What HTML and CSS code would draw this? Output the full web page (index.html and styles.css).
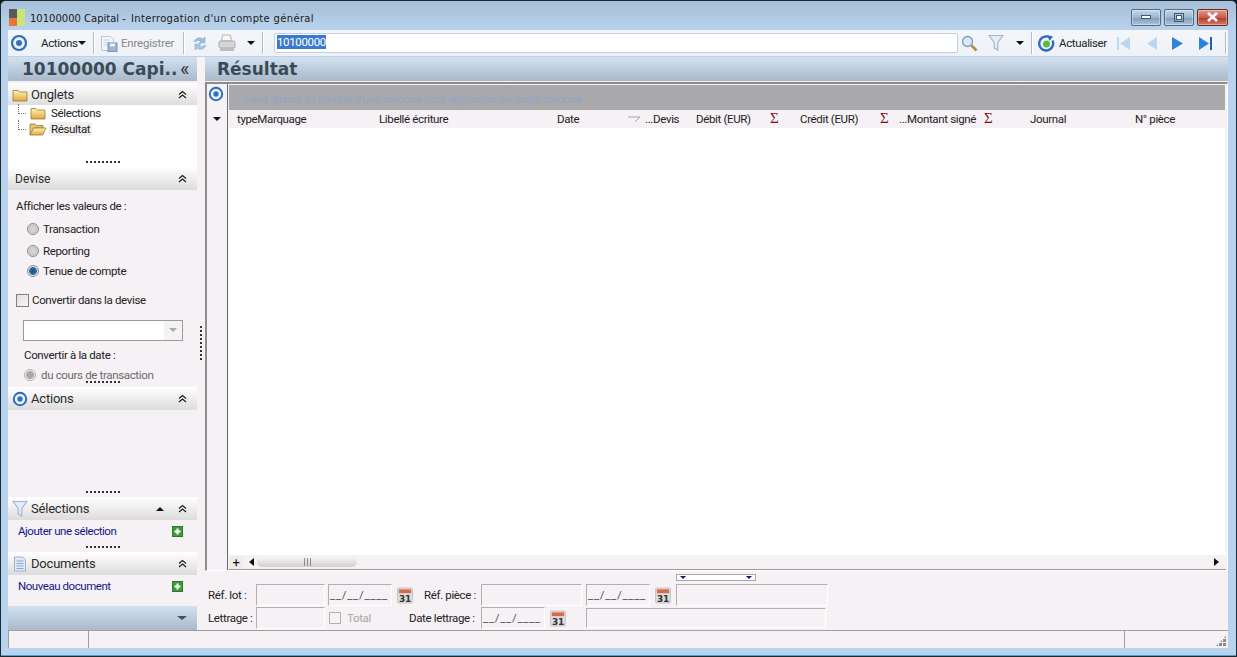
FILE: index.html
```html
<!DOCTYPE html>
<html lang="fr">
<head>
<meta charset="utf-8">
<title>Interrogation d'un compte général</title>
<link rel="stylesheet" href="styles.css">
</head>
<body>
<svg class="defs" width="0" height="0" aria-hidden="true">
  <defs>
    <linearGradient id="fold" x1="0" y1="0" x2="0" y2="1"><stop offset="0" stop-color="#fff3b8"/><stop offset="1" stop-color="#e0a93a"/></linearGradient>
    <radialGradient id="ringg"><stop offset="0" stop-color="#fff"/><stop offset="1" stop-color="#dfe9f5"/></radialGradient>
    <symbol id="target" viewBox="0 0 18 18">
      <circle cx="9" cy="9" r="7" fill="url(#ringg)" stroke="#2e6db8" stroke-width="2.2"/>
      <circle cx="9" cy="9" r="3" fill="#2f72c4"/>
    </symbol>
    <symbol id="folder" viewBox="0 0 16 14">
      <path d="M1 2.5h5l1.5 1.5H15v9H1z" fill="url(#fold)" stroke="#9c7a32" stroke-width=".8"/>
    </symbol>
    <symbol id="folder-open" viewBox="0 0 18 14">
      <path d="M1 2h5l1.5 1.5H14V6H5L1 13z" fill="#e8c672" stroke="#9c7a32" stroke-width=".8"/>
      <path d="M1 13l3.5-7H17l-3.5 7z" fill="url(#fold)" stroke="#9c7a32" stroke-width=".8"/>
    </symbol>
    <symbol id="chev" viewBox="0 0 9 9">
      <path d="M1 4.5l3.5-3 3.5 3M1 8l3.5-3 3.5 3" fill="none" stroke="#222" stroke-width="1.3"/>
    </symbol>
    <symbol id="plus" viewBox="0 0 11 11">
      <rect x=".5" y=".5" width="10" height="10" fill="#3e9a3a" stroke="#2c7a2c"/>
      <path d="M5.5 2.5v6M2.5 5.5h6" stroke="#fff" stroke-width="2"/>
    </symbol>
    <symbol id="cal" viewBox="0 0 17 17">
      <rect x=".5" y=".5" width="16" height="16" rx="1.5" fill="#dcdcdc" stroke="#c4c4c4"/>
      <rect x="2" y="2" width="13" height="4" fill="#d9694a"/>
      <text x="8.5" y="15" font-family="'DejaVu Sans',sans-serif" font-weight="700" font-size="9.5" text-anchor="middle" fill="#333">31</text>
    </symbol>
    <symbol id="funnel" viewBox="0 0 16 18">
      <path d="M1 1.5h14L9.8 8.5v7.5l-3.6-2V8.5z" fill="#e4edf7" stroke="#9db4cc" stroke-width="1.1"/>
    </symbol>
  </defs>
</svg>

<div class="window">
  <header class="titlebar">
    <svg class="app-icon" width="16" height="17" viewBox="0 0 16 17" aria-hidden="true">
      <rect x="0" y="0" width="8" height="9" fill="#5a5a5a"/>
      <rect x="8" y="0" width="8" height="17" fill="#c8e47a"/>
      <rect x="0" y="9" width="8" height="8" fill="#e8743c"/>
    </svg>
    <span class="title-a">10100000 Capital -</span>
    <span class="title-b">Interrogation d'un compte général</span>
    <div class="winbtns">
      <div class="winbtn"><svg width="10" height="5" viewBox="0 0 10 5"><rect x=".5" y=".5" width="9" height="3" fill="#fff" stroke="#44586e"/></svg></div>
      <div class="winbtn"><svg width="10" height="9" viewBox="0 0 10 9"><rect x=".5" y=".5" width="9" height="8" fill="none" stroke="#44586e"/><rect x="2.5" y="2.5" width="5" height="4" fill="#fff" stroke="#44586e"/></svg></div>
      <div class="winbtn close"><svg width="13" height="10" viewBox="0 0 13 10"><path d="M2 1l9 8M11 1l-9 8" stroke="#fff" stroke-width="2.6"/></svg></div>
    </div>
  </header>

  <div class="toolbar">
    <svg class="t-target" width="18" height="18"><use href="#target"/></svg>
    <span class="t-actions">Actions</span><span class="caret c1"></span>
    <span class="t-sep s1"></span>
    <svg class="t-save" width="18" height="17" viewBox="0 0 18 17" aria-hidden="true">
      <path d="M1.5 1.5h9l3 3v11h-12z" fill="#f3f6fb" stroke="#b8c6d8"/>
      <path d="M3.5 5h6M3.5 7.5h7M3.5 10h4" stroke="#c4d0e0"/>
      <rect x="8" y="8" width="9" height="8.5" fill="#9db4d2" stroke="#7d96b8"/>
      <rect x="10" y="8.5" width="5" height="3" fill="#eef2f8"/>
    </svg>
    <span class="t-save-label">Enregistrer</span>
    <span class="t-sep s2"></span>
    <svg class="t-sync" width="16" height="17" viewBox="0 0 16 17" aria-hidden="true">
      <path d="M2 7c1-4 6-5.500 9-3l2-2v6H7l2-2C7.500 5 5 5.500 2 7z" fill="#9dbfe2" stroke="#86a9d0" stroke-width=".6"/>
      <path d="M14 10c-1 4-6 5.500-9 3l-2 2V9h6l-2 2c1.500 1 4 .5 7-1z" fill="#a9c8e4" stroke="#86a9d0" stroke-width=".6"/>
    </svg>
    <svg class="t-print" width="18" height="18" viewBox="0 0 18 18" aria-hidden="true">
      <path d="M4.500 1h8l1 6h-10z" fill="#f7f7f7" stroke="#b5b5b5"/>
      <rect x="1" y="7" width="16" height="7" rx="1.500" fill="#d6d6d6" stroke="#a8a8a8"/>
      <rect x="2" y="14" width="14" height="3" fill="#bdbdbd"/>
    </svg>
    <span class="caret c2"></span>
    <span class="t-sep s3"></span>
    <div class="t-input"><span class="sel">10100000</span></div>
    <svg class="t-search" width="17" height="17" viewBox="0 0 17 17" aria-hidden="true">
      <circle cx="6.500" cy="6.500" r="5" fill="#dbe8f6" stroke="#7d9dc0" stroke-width="1.300"/>
      <path d="M10.500 10.500l5 5" stroke="#b58a3a" stroke-width="2.600"/>
    </svg>
    <svg class="t-funnel" width="16" height="18"><use href="#funnel"/></svg>
    <span class="caret c3"></span>
    <span class="t-sep s4"></span>
    <svg class="t-refresh" width="17" height="17" viewBox="0 0 17 17" aria-hidden="true">
      <path d="M14.500 5.500A7 7 0 1 1 10 1.700" fill="none" stroke="#2e6db8" stroke-width="2.400"/>
      <path d="M9 0l6 1.500L11.500 6z" fill="#2e6db8"/>
      <circle cx="8.500" cy="9" r="3.500" fill="#5cb84a"/>
    </svg>
    <span class="t-refresh-label">Actualiser</span>
    <svg class="nav n1" width="15" height="15" viewBox="0 0 15 15" aria-hidden="true"><rect x="1" y="1" width="2" height="13" fill="#bcd6f0"/><path d="M14 1v13L4 7.500z" fill="#bcd6f0"/></svg>
    <svg class="nav n2" width="13" height="15" viewBox="0 0 13 15" aria-hidden="true"><path d="M12 1v13L2 7.500z" fill="#bcd6f0"/></svg>
    <svg class="nav n3" width="13" height="15" viewBox="0 0 13 15" aria-hidden="true"><path d="M1 1v13l11-6.500z" fill="#2a84dc"/></svg>
    <svg class="nav n4" width="15" height="15" viewBox="0 0 15 15" aria-hidden="true"><path d="M1 1v13l10-6.500z" fill="#2a84dc"/><rect x="12" y="1" width="2" height="13" fill="#1d5fb4"/></svg>
    <span class="t-sep s5"></span>
  </div>

  <div class="body">
    <aside class="sidebar">
      <div class="band side-band"><span class="band-title">10100000 Capi..</span><span class="collapse">«</span></div>

      <section class="panel p-onglets">
        <div class="phead"><svg class="phead-icon" width="16" height="14"><use href="#folder"/></svg><span class="ptitle">Onglets</span><svg class="chev" width="9" height="9"><use href="#chev"/></svg></div>
        <div class="tree">
          <div class="tree-row"><span class="branch"></span><svg width="18" height="14"><use href="#folder"/></svg><span>Sélections</span></div>
          <div class="tree-row"><span class="branch b2"></span><svg width="18" height="14"><use href="#folder-open"/></svg><span class="tree-sel">Résultat</span></div>
        </div>
        <div class="grip"></div>
      </section>

      <section class="panel p-devise">
        <div class="phead"><span class="ptitle plain">Devise</span><svg class="chev" width="9" height="9"><use href="#chev"/></svg></div>
        <div class="devise">
          <div class="d-lead">Afficher les valeurs de :</div>
          <label class="radio r1"><span class="dot"></span>Transaction</label>
          <label class="radio r2"><span class="dot"></span>Reporting</label>
          <label class="radio r3"><span class="dot on"></span>Tenue de compte</label>
          <label class="check"><span class="box"></span>Convertir dans la devise</label>
          <div class="combo"><span class="combo-btn"></span></div>
          <div class="d-date">Convertir à la date :</div>
          <label class="radio r4"><span class="dot dis"></span>du cours de transaction</label>
        </div>
        <div class="grip"></div>
      </section>

      <section class="panel p-actions">
        <div class="phead"><svg class="phead-icon" width="16" height="16"><use href="#target"/></svg><span class="ptitle">Actions</span><svg class="chev" width="9" height="9"><use href="#chev"/></svg></div>
        <div class="grip"></div>
      </section>

      <section class="panel p-selections">
        <div class="phead"><svg class="phead-icon" width="16" height="18"><use href="#funnel"/></svg><span class="ptitle">Sélections</span><span class="up"></span><svg class="chev" width="9" height="9"><use href="#chev"/></svg></div>
        <div class="linkrow"><a>Ajouter une sélection</a><svg width="11" height="11"><use href="#plus"/></svg></div>
        <div class="grip"></div>
      </section>

      <section class="panel p-documents">
        <div class="phead"><svg class="phead-icon" width="16" height="16" viewBox="0 0 16 16" aria-hidden="true"><path d="M2.500 1h8l3 3v11h-11z" fill="#dfe9f7" stroke="#9db4d2"/><path d="M4.500 5h7M4.500 7.500h7M4.500 10h7M4.500 12.500h7" stroke="#8aa6cc"/></svg><span class="ptitle">Documents</span><svg class="chev" width="9" height="9"><use href="#chev"/></svg></div>
        <div class="linkrow"><a>Nouveau document</a><svg width="11" height="11"><use href="#plus"/></svg></div>
      </section>

      <div class="band side-foot"><span class="foot-caret"></span></div>
    </aside>

    <div class="splitter"><span class="split-dots"></span></div>

    <main class="main">
      <div class="band main-band"><span class="band-title">Résultat</span></div>
      <div class="grid">
        <div class="grid-side">
          <svg class="gs-target" width="16" height="16"><use href="#target"/></svg>
          <span class="caret gs-caret"></span>
        </div>
        <div class="grid-main">
          <div class="group">Faire glisser ici l'entête d'une colonne pour regrouper sur cette colonne</div>
          <div class="cols">
            <div class="col c-type">typeMarquage</div>
            <div class="col c-lib">Libellé écriture</div>
            <div class="col c-date">Date</div>
            <div class="col c-dev"><svg class="sort" width="14" height="7" viewBox="0 0 14 7" aria-hidden="true"><path d="M13 1H1M13 1L8 6" fill="none" stroke="#a8a8a8" stroke-width="1"/></svg>...Devis</div>
            <div class="col c-deb"><span class="lbl">Débit (EUR)</span><span class="sigma">Σ</span></div>
            <div class="col c-cre"><span class="lbl">Crédit (EUR)</span><span class="sigma">Σ</span></div>
            <div class="col c-mon"><span class="lbl">...Montant signé</span><span class="sigma">Σ</span></div>
            <div class="col c-jou">Journal</div>
            <div class="col c-pie">N° pièce</div>
          </div>
          <div class="rows"></div>
          <div class="hscroll">
            <span class="add">+</span>
            <span class="sb-left"></span>
            <span class="thumb"><span class="thumb-grip"></span></span>
            <span class="sb-right"></span>
          </div>
        </div>
      </div>
      <div class="form">
        <div class="form-grip"><span class="tri"></span><span class="tri"></span></div>
        <div class="frow r-a">
          <span class="flabel l-lot">Réf. lot :</span>
          <span class="field w-lot"></span>
          <span class="field date">__/__/____</span>
          <svg class="calicon" width="16" height="17"><use href="#cal"/></svg>
          <span class="flabel l-piece">Réf. pièce :</span>
          <span class="field w-piece"></span>
          <span class="field date">__/__/____</span>
          <svg class="calicon" width="16" height="17"><use href="#cal"/></svg>
          <span class="field w-end"></span>
        </div>
        <div class="frow r-b">
          <span class="flabel l-lot">Lettrage :</span>
          <span class="field w-lot"></span>
          <span class="total"><span class="box small"></span>Total</span>
          <span class="flabel l-dl">Date lettrage :</span>
          <span class="field date">__/__/____</span>
          <svg class="calicon" width="16" height="17"><use href="#cal"/></svg>
          <span class="field w-end2"></span>
        </div>
      </div>
    </main>
  </div>

  <footer class="status">
    <span class="st st1"></span>
    <span class="st st2"></span>
    <span class="st st3"><span class="resize"></span></span>
  </footer>
</div>
</body>
</html>
```
FILE: styles.css
```css
* { box-sizing: border-box; }
html, body { margin: 0; padding: 0; }
body {
  width: 1237px;
  height: 657px;
  overflow: hidden;
  font-family: Roboto, "Liberation Sans", Arial, sans-serif;
  font-size: 11.5px;
  letter-spacing: -.35px;
  color: #222;
  background: #0c1a24;
}
.defs { position: absolute; }
svg { display: block; flex: none; }

.window {
  width: 1237px;
  height: 657px;
  display: flex;
  flex-direction: column;
  background: #b9d3ee;
  border: 1px solid #1c2a34;
  border-radius: 6px 6px 0 0;
  overflow: hidden;
  box-shadow: inset 0 -1px 0 #4aa3c8;
}

/* Title bar */
.titlebar {
  height: 29px;
  flex: none;
  display: flex;
  align-items: center;
  padding-left: 8px;
  background: linear-gradient(#a6bfd8, #b9d3ee);
  font-family: "DejaVu Sans", sans-serif;
  font-size: 10px;
  letter-spacing: 0;
  color: #1a1a1a;
}
.app-icon { margin-right: 5px; margin-top: 3px; }
.title-a { width: 101px; margin-top: 6px; white-space: nowrap; }
.title-b { margin-top: 6px; white-space: nowrap; letter-spacing: .33px; }
.winbtns { margin-left: auto; margin-right: 8px; margin-top: 3px; display: flex; gap: 3px; }
.winbtn {
  width: 30px; height: 17px;
  display: flex; align-items: center; justify-content: center;
  background: linear-gradient(#c5d7ea 0, #9db6cf 50%, #7f9cb9 52%, #adc5dc 100%);
  border: 1px solid #55697f;
  border-radius: 2px;
  box-shadow: inset 0 0 0 1px rgba(255,255,255,.35);
}
.winbtn.close {
  width: 31px;
  background: linear-gradient(#e29a8a 0, #cc5a4a 50%, #b13a2a 52%, #d27a66 100%);
  border-color: #6d2a22;
}

/* Toolbar */
.toolbar {
  height: 26px;
  flex: none;
  margin: 0 8px 0 7px;
  display: flex;
  align-items: center;
  background: linear-gradient(#f4f6fa, #eef1f6);
  color: #222;
}
.t-target { margin-left: 2px; }
.t-actions { margin-left: 13px; width: 35px; white-space: nowrap; }
.caret {
  display: inline-block;
  width: 0; height: 0;
  border-left: 4px solid transparent;
  border-right: 4px solid transparent;
  border-top: 4px solid #111;
  flex: none;
}
.c1 { margin-left: 2px; }
.t-sep { width: 1px; height: 22px; background: #b8bcc2; flex: none; box-shadow: 1px 0 0 #fff; }
.s1 { margin-left: 7px; }
.t-save { margin-left: 6px; }
.t-save-label { margin-left: 3px; color: #8a8a8a; width: 53px; white-space: nowrap; letter-spacing: -.2px; }
.s2 { margin-left: 9px; }
.t-sync { margin-left: 8px; }
.t-print { margin-left: 10px; }
.c2 { margin-left: 11px; }
.s3 { margin-left: 7px; }
.t-input {
  width: 684px;
  height: 20px;
  margin-left: 11px;
  padding: 1px 2px;
  background: #fff;
  border: 1px solid #c0d0e2;
  border-radius: 2px;
  line-height: 14px;
}
.sel { background: #3a7bd0; color: #fff; display: inline-block; }
.t-search { margin-left: 3px; }
.t-funnel { margin-left: 10px; }
.c3 { margin-left: 12px; }
.s4 { margin-left: 7px; }
.t-refresh { margin-left: 6px; }
.t-refresh-label { margin-left: 4px; width: 48px; white-space: nowrap; }
.n1 { margin-left: 9px; }
.n2 { margin-left: 14px; }
.n3 { margin-left: 13px; }
.n4 { margin-left: 14px; }
.s5 { margin-left: 12px; }

/* Body */
.body {
  height: 574px;
  flex: none;
  display: flex;
  padding: 1px 8px 0 7px;
}
.sidebar {
  width: 189px;
  flex: none;
  display: flex;
  flex-direction: column;
  background: #f5f1f5;
}
.band {
  flex: none;
  background: linear-gradient(#d3e1ef, #a9b9ca);
}
.band-title {
  font-family: "DejaVu Sans", sans-serif;
  font-weight: 700;
  font-size: 17px;
  letter-spacing: 0;
  color: #3c4a58;
  white-space: nowrap;
}
.side-band {
  height: 24px;
  display: flex;
  align-items: center;
  padding-left: 14px;
  position: relative;
}
.collapse {
  margin-left: auto;
  margin-right: 8px;
  font-size: 20px;
  color: #333;
  line-height: 20px;
}
.panel { position: relative; flex: none; overflow: hidden; }
.p-onglets { height: 84px; margin-top: 2px; background: #fff; }
.p-devise { height: 220px; }
.p-actions { height: 110px; }
.p-selections { height: 55px; }
.p-documents { height: 54px; }
.phead {
  height: 23px;
  display: flex;
  align-items: center;
  padding-left: 4px;
  padding-right: 10px;
  background: linear-gradient(#fff, #dcdcdc);
}
.ptitle { font-size: 13px; margin-left: 3px; color: #2c2c2c; letter-spacing: -.2px; }
.ptitle.plain { margin-left: 3px; font-size: 12px; letter-spacing: 0; }
.chev { margin-left: auto; }
.grip {
  position: absolute;
  left: 78px;
  bottom: 4px;
  width: 35px;
  height: 2px;
  background: repeating-linear-gradient(90deg, #333 0 2px, transparent 2px 4px);
}
.tree { padding: 0 0 0 10px; margin-top: -1px; background: #fff; }
.tree-row { display: flex; align-items: center; gap: 4px; height: 16px; }
.branch { width: 8px; height: 10px; margin-right: -1px; border-left: 1px dotted #777; border-bottom: 1px dotted #777; margin-top: -8px; }
.tree-sel { background: #f3efef; border-radius: 2px; padding: 0 2px; margin-left: -2px; }

.devise { height: 197px; padding-left: 8px; }
.d-lead { padding-top: 9px; height: 29px; }
.radio { display: flex; align-items: center; height: 20px; }
.r1, .r2, .r3 { padding-left: 11px; }
.r2 { margin-top: 2px; }
.dot {
  width: 12px; height: 12px;
  border-radius: 50%;
  margin-right: 4px;
  border: 1px solid #8c8c8c;
  background: radial-gradient(circle, #dcdcdc 0, #c8c8c8 55%, #f5f5f5 100%);
  flex: none;
}
.dot.on { background: radial-gradient(circle, #164f86 0, #2a6fa8 50%, #e4e4e4 60%); }
.dot.dis { background: radial-gradient(circle, #a8a8a8 0, #a8a8a8 50%, #eee 60%); border-color: #b0b0b0; }
.check { display: flex; align-items: center; margin-top: 12px; height: 14px; white-space: nowrap; }
.box {
  width: 13px; height: 13px;
  margin-right: 3px;
  background: linear-gradient(135deg, #dedede, #f8f8f8);
  border: 1px solid #7f7f7f;
  flex: none;
}
.box.small { width: 12px; height: 12px; background: #f5f1f5; border-color: #b0b0b0; margin-right: 6px; }
.combo {
  margin: 13px 0 0 7px;
  width: 160px; height: 21px;
  background: #fff;
  border: 1px solid #9a9a9a;
  display: flex;
  justify-content: flex-end;
}
.combo-btn {
  width: 18px;
  background: #f3f3f3;
  position: relative;
}
.combo-btn::after {
  content: "";
  position: absolute;
  left: 5px; top: 7px;
  border-left: 4px solid transparent;
  border-right: 4px solid transparent;
  border-top: 4px solid #a8a8a8;
}
.d-date { margin: 7px 0 0 8px; height: 15px; }
.r4 { padding-left: 8px; margin-top: 4px; height: 15px; color: #6a6a6a; white-space: nowrap; }
.r4 .dot { margin-right: 5px; }

.up {
  margin-left: auto;
  margin-right: 14px;
  width: 0; height: 0;
  border-left: 4px solid transparent;
  border-right: 4px solid transparent;
  border-bottom: 4px solid #111;
}
.up + .chev { margin-left: 0; }
.linkrow {
  display: flex;
  justify-content: space-between;
  align-items: center;
  height: 22px;
  padding: 0 14px 0 10px;
  letter-spacing: -.45px;
  color: #15158a;
}
.side-foot {
  height: 24px;
  display: flex;
  align-items: center;
  justify-content: flex-end;
  padding-right: 10px;
}
.foot-caret {
  border-left: 5px solid transparent;
  border-right: 5px solid transparent;
  border-top: 4px solid #45525f;
}
.splitter {
  width: 8px;
  flex: none;
  background: #f5f1f5;
  position: relative;
}
.split-dots {
  position: absolute;
  left: 3px; top: 269px;
  width: 2px; height: 35px;
  background: repeating-linear-gradient(#333 0 2px, transparent 2px 4px);
}

/* Main */
.main { flex: 1; min-width: 0; display: flex; flex-direction: column; background: #f5f1f5; }
.main-band { height: 24px; padding-left: 12px; display: flex; align-items: center; }
.grid {
  height: 489px;
  flex: none;
  display: flex;
  margin-top: 1px;
  border-top: 2px solid #8c8c8c;
  border-left: 2px solid #8c8c8c;
  border-right: 1px solid #fff;
  border-bottom: 1px solid #fff;
  background: #f5f1f5;
}
.grid-side {
  width: 21px;
  flex: none;
  border-right: 1px solid #6c6c6c;
  position: relative;
  display: flex;
  flex-direction: column;
  align-items: center;
}
.gs-target { margin: 2px 2px 0 0; }
.gs-caret { margin-top: 15px; }
.grid-main { flex: 1; min-width: 0; display: flex; flex-direction: column; padding: 1px 2px 0 1px; }
.group {
  height: 25px;
  flex: none;
  background: #a9a8aa;
  color: #8ea7c6;
  padding: 7px 0 0 15px;
  letter-spacing: -.3px;
  line-height: 14px;
  white-space: nowrap;
}
.cols {
  height: 18px;
  flex: none;
  display: flex;
  align-items: center;
  padding-left: 8px;
  background: #f5f1f5;
  white-space: nowrap;
}
.col { display: flex; align-items: center; flex: none; }
.c-type { width: 142px; }
.c-lib { width: 178px; }
.c-date { width: 70px; }
.c-dev { width: 69px; }
.sort { margin-right: 4px; }
.c-deb { width: 104px; }
.c-deb .lbl { width: 74px; }
.c-cre { width: 99px; }
.c-cre .lbl { width: 80px; }
.c-mon { width: 131px; }
.c-mon .lbl { width: 85px; }
.c-jou { width: 105px; }
.sigma { color: #7a1414; font-size: 15px; line-height: 14px; margin-top: -3px; font-family: "Liberation Serif", serif; }
.rows { flex: 1; background: #fff; }
.hscroll {
  height: 15px;
  flex: none;
  display: flex;
  align-items: center;
  background: #f5f1f5;
  border-bottom: 1px solid #9a9a9a;
  margin-right: -1px;
}
.add { width: 14px; text-align: center; font-size: 13px; line-height: 13px; color: #111; background: #ededed; }
.sb-left {
  margin-left: 6px;
  border-top: 4px solid transparent;
  border-bottom: 4px solid transparent;
  border-right: 5px solid #111;
}
.thumb {
  width: 100px;
  height: 10px;
  margin-left: 3px;
  border-radius: 5px;
  background: linear-gradient(#f5f5f5, #cfcfcf);
  display: flex;
  justify-content: center;
}
.thumb-grip {
  width: 7px; height: 8px; margin-top: 1px;
  background: repeating-linear-gradient(90deg, #8a8a8a 0 1px, transparent 1px 3px);
}
.sb-right {
  margin-left: auto;
  margin-right: 7px;
  border-top: 4px solid transparent;
  border-bottom: 4px solid transparent;
  border-left: 5px solid #111;
}

/* Form */
.form {
  flex: 1;
  position: relative;
  padding: 13px 0 0 3px;
  background: #f5f1f5;
}
.form-grip {
  position: absolute;
  left: 471px; top: 3px;
  width: 80px; height: 7px;
  border: 1px solid #a8a8a8;
  background: #fff;
  display: flex;
  justify-content: space-between;
  padding: 1px 3px;
}
.tri {
  border-left: 3px solid transparent;
  border-right: 3px solid transparent;
  border-top: 3px solid #14148a;
}
.frow { display: flex; align-items: center; height: 22px; margin-bottom: 1px; white-space: nowrap; }
.flabel { flex: none; }
.l-lot { width: 48px; }
.l-piece { width: 57px; margin-left: 11px; }
.l-dl { width: 72px; margin-left: 7px; }
.field {
  height: 22px;
  flex: none;
  border-top: 1px solid #b0b0b0;
  border-left: 1px solid #b0b0b0;
  border-right: 1px solid #fff;
  border-bottom: 1px solid #fff;
  color: #555;
  line-height: 21px;
  padding-left: 1px;
}
.w-lot { width: 69px; }
.date { width: 64px; margin-left: 3px; letter-spacing: .7px; }
.r-b .date { margin-left: 0; }
.w-piece { width: 101px; margin-right: 1px; }
.w-end { width: 152px; margin-left: 5px; }
.w-end2 { width: 240px; margin-left: 20px; height: 20px; }
.calicon { margin-left: 5px; }
.total { display: flex; align-items: center; width: 73px; margin-left: 4px; color: #a8a8a8; }

/* Status */
.status {
  height: 18px;
  flex: none;
  margin: 0 8px 0 7px;
  display: flex;
  background: #f5f1f5;
  border-top: 1px solid #a0a0a0;
}
.st { height: 100%; border-right: 1px solid #a0a0a0; flex: none; }
.st1 { width: 81px; border-left: 1px solid #a0a0a0; }
.st2 { width: 1036px; }
.st3 { flex: 1; border-right: 0; display: flex; justify-content: flex-end; align-items: flex-end; }
.resize {
  width: 12px; height: 12px; margin: 0 1px 1px 0;
  background:
    radial-gradient(circle at 1.5px 1.5px, #8a8a8a 1.5px, transparent 1.5px) 0 0 / 4px 4px;
  clip-path: polygon(100% 0, 100% 100%, 0 100%);
}
```
